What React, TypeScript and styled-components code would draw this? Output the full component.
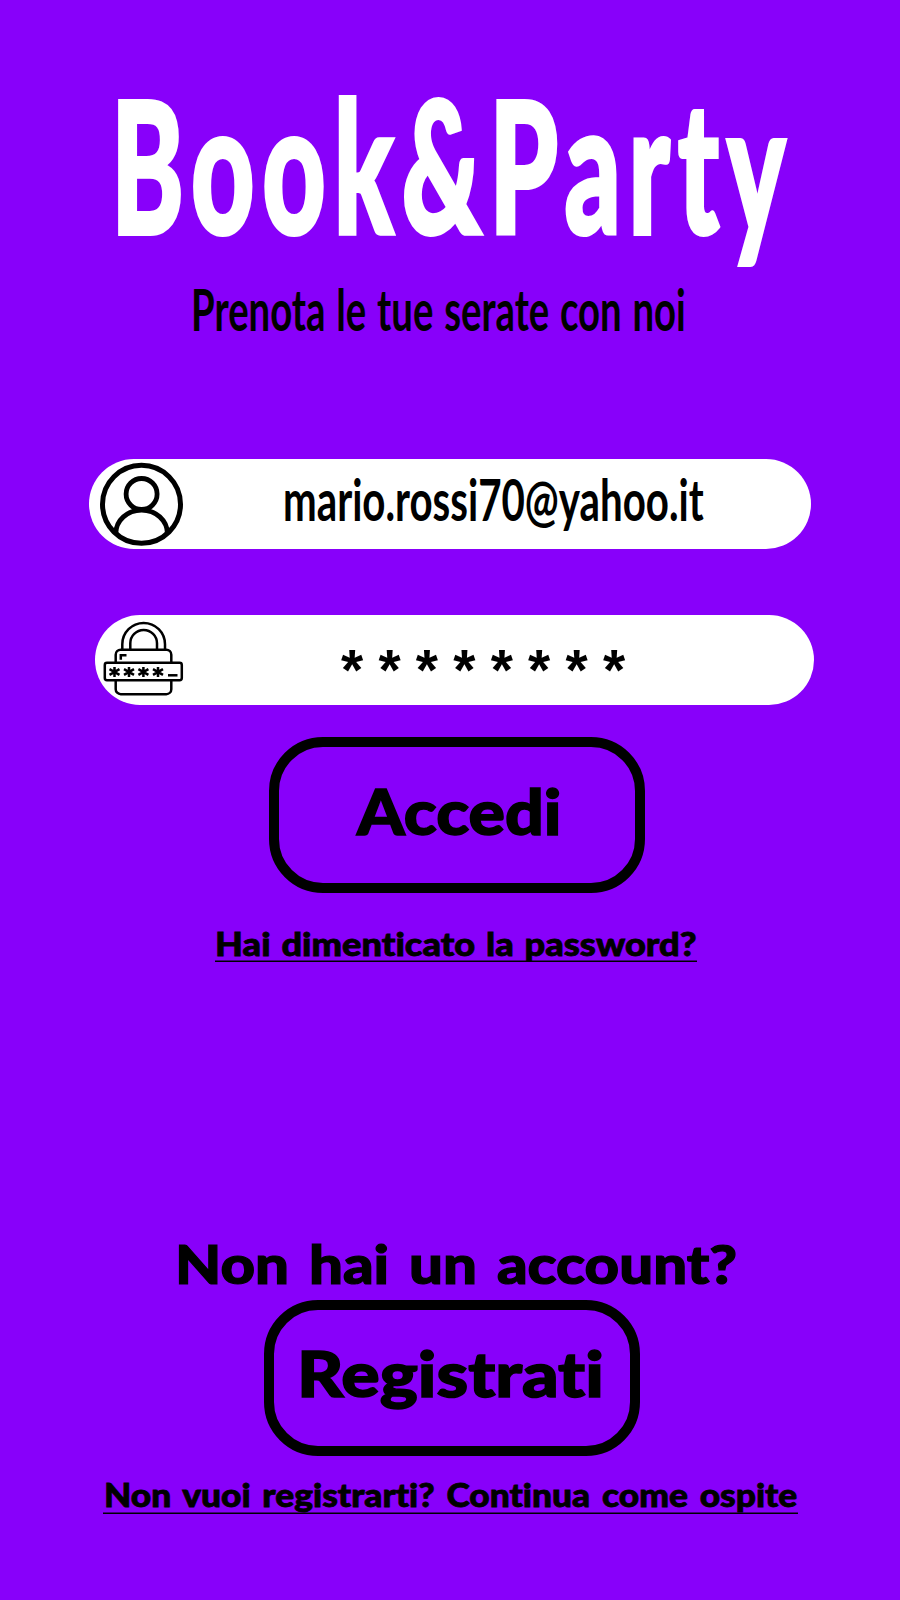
import React from "react";
import styled, { createGlobalStyle } from "styled-components";

const GlobalStyle = createGlobalStyle`
  body { margin: 0; background: #8800fa; }
  * { box-sizing: border-box; }
`;

const Screen = styled.main`
  width: 900px;
  height: 1600px;
  overflow: hidden;
  display: flex;
  flex-direction: column;
  align-items: flex-start;
  background: #8800fa;
  color: #000;
  font-family: Lato, "Liberation Sans", sans-serif;
  font-variant-ligatures: none;
`;

type LineProps = {
  $size: number;
  $stretch?: number;
  $weight?: number;
  $left?: number;
  $top?: number;
  $word?: number;
  $letter?: number;
  $stroke?: number;
};

const Line = styled.span<LineProps>`
  display: block;
  flex: none;
  margin: ${(p) => p.$top ?? 0}px 0 0 ${(p) => p.$left ?? 0}px;
  font-size: ${(p) => p.$size}px;
  font-weight: ${(p) => p.$weight ?? 900};
  line-height: 1;
  white-space: nowrap;
  word-spacing: ${(p) => p.$word ?? 0}px;
  letter-spacing: ${(p) => p.$letter ?? 0}px;
  -webkit-text-stroke: ${(p) => p.$stroke ?? 0}px currentColor;
  transform: scaleX(${(p) => p.$stretch ?? 1});
  transform-origin: left;
`;

const Brand = styled(Line)`
  color: #fff;
`;

const Field = styled.div<{ $left: number; $top: number; $width: number }>`
  display: flex;
  align-items: flex-start;
  width: ${(p) => p.$width}px;
  height: 90px;
  margin: ${(p) => p.$top}px 0 0 ${(p) => p.$left}px;
  border-radius: 45px;
  background: #fff;
`;

const Icon = styled.svg<{ $left: number; $top: number }>`
  flex: none;
  margin: ${(p) => p.$top}px 0 0 ${(p) => p.$left}px;
  fill: none;
  stroke: #000;
`;

const Mask = styled(Line)`
  font-family: "Liberation Sans", sans-serif;
`;

const Button = styled.button<{ $left: number; $top: number }>`
  display: flex;
  align-items: flex-start;
  width: 376px;
  height: 156px;
  padding: 0;
  margin: ${(p) => p.$top}px 0 0 ${(p) => p.$left}px;
  border: 10px solid #000;
  border-radius: 54px;
  background: none;
  color: inherit;
  font-family: inherit;
  font-variant-ligatures: inherit;
`;

const Link = styled.a<{ $left: number; $top: number; $width: number }>`
  display: flex;
  flex: none;
  width: ${(p) => p.$width}px;
  height: 35px;
  margin: ${(p) => p.$top}px 0 0 ${(p) => p.$left}px;
  border-bottom: 1px solid #000;
  box-shadow: inset 0 -1px rgba(0, 0, 0, 0.5);
  color: inherit;
  text-decoration: none;
`;

const UserIcon = () => (
  <Icon $left={10} $top={3} width="85" height="85" viewBox="0 0 85 85">
    <circle cx="42.5" cy="42.3" r="39" strokeWidth="5" />
    <circle cx="42.6" cy="32" r="15.5" strokeWidth="4.8" />
    <path d="M16.8 72V71.5a25.8 23.5 0 0 1 51.6 0V72" strokeWidth="4.8" />
  </Icon>
);

const LockIcon = () => (
  <Icon $left={8} $top={5} width="82" height="78" viewBox="0 0 82 78" strokeWidth="2.5">
    <path d="M19.3 29.5V24.3a21.3 21.3 0 0 1 42.7 0V29.5M27.3 29.5V23.3a13.3 13.3 0 0 1 26.7 0V29.5" />
    <path d="M12.7 42.5V34.7a5 5 0 0 1 5-5H63.3a5 5 0 0 1 5 5V42.5M12.7 60.5V69.2a5 5 0 0 0 5 5H63.3a5 5 0 0 0 5-5V60.5" />
    <path d="M17.8 39.8V35.3H23.5" />
    <rect x="1.8" y="42.7" width="77" height="17.6" rx="2.2" />
    {[11.5, 26, 40.4, 55].map((x) => (
      <path key={x} d={`M${x} 47v10M${x - 5} 49.2l10 5.6M${x - 5} 54.8l10-5.6`} />
    ))}
    <path d="M65 55.3H74.5" />
  </Icon>
);

export default function App() {
  return (
    <>
      <GlobalStyle />
      <Screen>
        <Brand as="h1" $size={184} $stretch={0.598} $letter={13} $left={111} $top={71} $stroke={4}>
          Book&amp;Party
        </Brand>
        <Line as="p" $size={57} $weight={700} $stretch={0.672} $word={2.2} $left={190.5} $top={26}>
          Prenota le tue serate con noi
        </Line>

        <Field $left={89} $top={121} $width={722}>
          <UserIcon />
          <Line $size={57} $weight={700} $stretch={0.706} $left={99.3} $top={11.7}>
            mario.rossi70@yahoo.it
          </Line>
        </Field>
        <Field $left={95} $top={66} $width={719}>
          <LockIcon />
          <Mask $size={57} $left={156} $top={27} $word={-0.6}>
            * * * * * * * *
          </Mask>
        </Field>

        <Button $left={269} $top={32}>
          <Line $size={63} $stretch={1.08} $left={78.3} $top={32.4} $stroke={1.5}>
            Accedi
          </Line>
        </Button>
        <Link $left={215} $top={34} $width={482}>
          <Line $size={32} $stretch={1.132} $word={2} $left={-0.5} $top={0.5} $stroke={0.8}>
            Hai dimenticato la password?
          </Line>
        </Link>

        <Line as="h2" $size={53} $stretch={1.131} $word={5} $left={174.8} $top={275.4} $stroke={1.2}>
          Non hai un account?
        </Line>
        <Button $left={264} $top={9.6}>
          <Line $size={63} $stretch={1.139} $left={23} $top={31.4} $stroke={1.5}>
            Registrati
          </Line>
        </Button>
        <Link $left={103} $top={23} $width={695}>
          <Line $size={31.5} $stretch={1.122} $word={3} $left={0.5} $top={1.2} $stroke={0.8}>
            Non vuoi registrarti? Continua come ospite
          </Line>
        </Link>
      </Screen>
    </>
  );
}
